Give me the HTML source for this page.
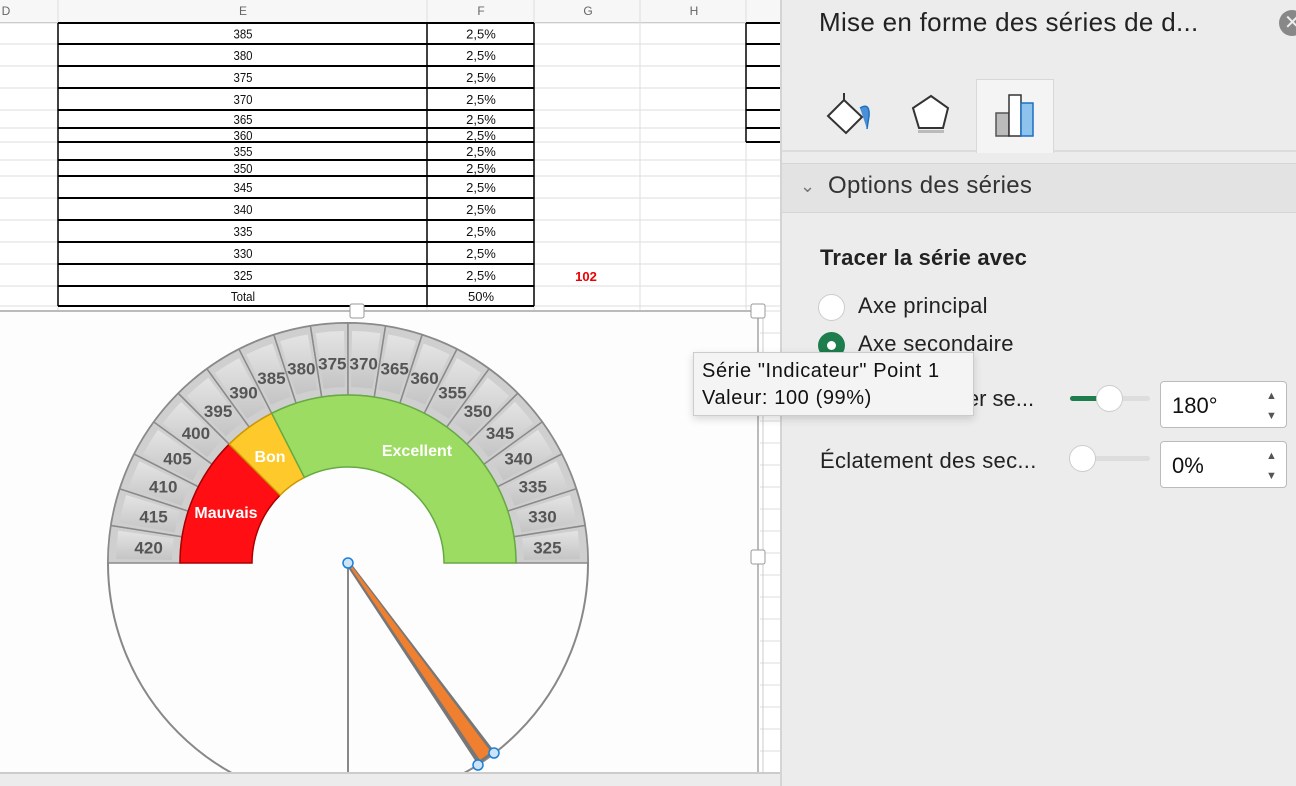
<!DOCTYPE html>
<html><head><meta charset="utf-8"><style>
*{margin:0;padding:0;box-sizing:border-box}
body{width:1296px;height:786px;overflow:hidden;background:#fff;font-family:"Liberation Sans",sans-serif;position:relative}
.abs{position:absolute}
#panel{position:absolute;left:780px;top:0;width:516px;height:786px;background:#ececec;border-left:2px solid #d4d4d4}
</style></head><body>
<svg class="abs" style="left:0;top:0" width="780" height="786" id="sheet"></svg>
<svg class="abs" style="left:0;top:0" width="780" height="786" id="chart"></svg>
<div id="panel">
 <div class="abs" style="left:37px;top:7px;font-size:26px;letter-spacing:0.3px;color:#222">Mise en forme des séries de d...</div>
 <div class="abs" style="left:497px;top:10px;width:26px;height:26px;border-radius:13px;background:#888;color:#eee;font-size:20px;line-height:26px;text-indent:5px">✕</div>
 <div class="abs" style="left:0;top:150px;width:516px;height:2px;background:#dcdcdc"></div>
 <div class="abs" style="left:194px;top:79px;width:78px;height:74px;background:#f4f4f4;border:1px solid #d8d8d8;border-bottom:none"></div>
 <svg class="abs" style="left:40px;top:90px" width="220" height="50">
  <path d="M6 26 L22 10 L40 27 L24 43 Z" fill="#fff" stroke="#333" stroke-width="2"/>
  <path d="M22 10 V3" stroke="#333" stroke-width="2"/>
  <path d="M38 18 Q48 12 47 26 Q46 32 45 39" fill="#4a90d9" stroke="#1f6fc0" stroke-width="1.5"/>
  <path d="M109 6 L126 18 L121 38 L97 38 L91 18 Z" fill="#fff" stroke="#333" stroke-width="2"/>
  <rect x="96" y="40" width="26" height="3" fill="#bbb"/>
  <rect x="174" y="23" width="13" height="23" fill="#bbb" stroke="#555" stroke-width="1.5"/>
  <rect x="187" y="5" width="12" height="41" fill="#fff" stroke="#333" stroke-width="1.5"/>
  <rect x="199" y="13" width="12" height="33" fill="#8ec3ee" stroke="#1f6fc0" stroke-width="1.5"/>
 </svg>
 <div class="abs" style="left:0;top:163px;width:516px;height:50px;background:#e3e3e3;border-top:1px solid #d6d6d6;border-bottom:1px solid #d6d6d6"></div>
 <div class="abs" style="left:18px;top:176px;font-size:18px;color:#777">⌄</div>
 <div class="abs" style="left:46px;top:172px;font-size:24px;letter-spacing:0.3px;color:#333">Options des séries</div>
 <div class="abs" style="left:38px;top:245px;font-size:22px;letter-spacing:0.2px;font-weight:bold;color:#222">Tracer la série avec</div>
 <div class="abs" style="left:36px;top:294px;width:27px;height:27px;border-radius:14px;background:#fff;border:1px solid #ccc"></div>
 <div class="abs" style="left:76px;top:293px;font-size:22px;letter-spacing:0.3px;color:#222">Axe principal</div>
 <div class="abs" style="left:36px;top:332px;width:27px;height:27px;border-radius:14px;background:#1d7d4c"></div>
 <div class="abs" style="left:45px;top:341px;width:9px;height:9px;border-radius:5px;background:#fff"></div>
 <div class="abs" style="left:76px;top:331px;font-size:22px;letter-spacing:0.3px;color:#222">Axe secondaire</div>
 <div class="abs" style="left:180px;top:386px;font-size:22px;color:#222">ier se...</div>
 <div class="abs" style="left:288px;top:396px;width:80px;height:5px;border-radius:3px;background:#ddd"></div>
 <div class="abs" style="left:288px;top:396px;width:35px;height:5px;border-radius:3px;background:#1d7d4c"></div>
 <div class="abs" style="left:314px;top:385px;width:27px;height:27px;border-radius:14px;background:#fff;border:1px solid #ccc"></div>
 <div class="abs" style="left:378px;top:381px;width:127px;height:47px;background:#fff;border:1px solid #bbb;border-radius:4px"></div>
 <div class="abs" style="left:390px;top:393px;font-size:22px;color:#111">180°</div>
 <div class="abs" style="left:484px;top:386px;font-size:11px;color:#555;line-height:20px">▲<br>▼</div>
 <div class="abs" style="left:38px;top:448px;font-size:22px;letter-spacing:0.3px;color:#222">Éclatement des sec...</div>
 <div class="abs" style="left:288px;top:456px;width:80px;height:5px;border-radius:3px;background:#ddd"></div>
 <div class="abs" style="left:287px;top:445px;width:27px;height:27px;border-radius:14px;background:#fff;border:1px solid #ccc"></div>
 <div class="abs" style="left:378px;top:441px;width:127px;height:47px;background:#fff;border:1px solid #bbb;border-radius:4px"></div>
 <div class="abs" style="left:390px;top:453px;font-size:22px;color:#111">0%</div>
 <div class="abs" style="left:484px;top:446px;font-size:11px;color:#555;line-height:20px">▲<br>▼</div>
</div>
<div class="abs" style="left:693px;top:352px;width:281px;height:64px;background:#f4f4f4;border:1px solid #ccc;box-shadow:0 3px 8px rgba(0,0,0,.15);font-size:20px;letter-spacing:0.6px;color:#111;padding:5px 8px;line-height:27px;white-space:nowrap">Série "Indicateur" Point 1<br>Valeur: 100 (99%)</div>
<script>
var ns="http://www.w3.org/2000/svg";
function el(p,t,a,txt){var e=document.createElementNS(ns,t);for(var k in a)e.setAttribute(k,a[k]);if(txt)e.textContent=txt;p.appendChild(e);return e}
var S=document.getElementById('sheet');
el(S,'rect',{x:0,y:0,width:780,height:786,fill:'#fff'});
el(S,'rect',{x:0,y:0,width:780,height:22,fill:'#f7f7f7'});
el(S,'line',{x1:0,y1:22.5,x2:780,y2:22.5,stroke:'#bbb'});
[58,427,534,640,746].forEach(function(x){el(S,'line',{x1:x,y1:0,x2:x,y2:310,stroke:'#ddd'})});
var hdr=[["D",6],["E",243],["F",481],["G",588],["H",694]];
hdr.forEach(function(h){el(S,'text',{x:h[1],y:15,'font-size':12,fill:'#666','text-anchor':'middle','font-family':'Liberation Sans'},h[0])});
var rows=[23,44,66,88,110,128,142,160,176,198,220,242,264,286,306];
rows.forEach(function(y){el(S,'line',{x1:0,y1:y,x2:780,y2:y,stroke:'#ddd'})});
for(var i=0;i<rows.length;i++){el(S,'line',{x1:58,y1:rows[i],x2:534,y2:rows[i],stroke:'#000','stroke-width':2})}
[58,427,534].forEach(function(x){el(S,'line',{x1:x,y1:23,x2:x,y2:306,stroke:'#000','stroke-width':1.5})});
[23,44,66,88,110,128,142].forEach(function(y){el(S,'line',{x1:746,y1:y,x2:780,y2:y,stroke:'#000','stroke-width':2})});
el(S,'line',{x1:746,y1:23,x2:746,y2:142,stroke:'#000','stroke-width':1.5});
var vals=["385","380","375","370","365","360","355","350","345","340","335","330","325","Total"];
for(var i=0;i<vals.length;i++){var y=(rows[i]+rows[i+1])/2+5;
 el(S,'text',{x:243,y:y,'font-size':13,'text-anchor':'middle','font-family':'Liberation Sans',fill:'#111',transform:'translate(243 0) scale(.88 1) translate(-243 0)'},vals[i]);
 el(S,'text',{x:481,y:y,'font-size':13,'text-anchor':'middle','font-family':'Liberation Sans',fill:'#111'},i==13?"50%":"2,5%");}
el(S,'text',{x:586,y:281,'font-size':13,'font-weight':'bold','text-anchor':'middle','font-family':'Liberation Sans',fill:'#e00'},"102");
el(S,'rect',{x:0,y:311,width:758,height:462,fill:'#fdfdfd'});
el(S,'line',{x1:0,y1:311,x2:758,y2:311,stroke:'#bbb','stroke-width':2});
el(S,'line',{x1:758,y1:311,x2:758,y2:773,stroke:'#bbb','stroke-width':2});
for(var y=311;y<773;y+=22)el(S,'line',{x1:760,y1:y,x2:780,y2:y,stroke:'#ddd'});
el(S,'line',{x1:763,y1:311,x2:763,y2:773,stroke:'#ccc'});
var C=document.getElementById('chart');
var cx=348,cy=563;
function pt(r,a){a=a*Math.PI/180;return [cx+r*Math.cos(a),cy-r*Math.sin(a)]}
function seg(r1,r2,a1,a2,fill,stroke){var p1=pt(r2,a1),p2=pt(r2,a2),p3=pt(r1,a2),p4=pt(r1,a1);
 return el(C,'path',{d:'M'+p1+' A'+r2+' '+r2+' 0 0 1 '+p2+' L'+p3+' A'+r1+' '+r1+' 0 0 0 '+p4+' Z',fill:fill,stroke:stroke||'#777','stroke-width':1.5})}
el(C,'circle',{cx:cx,cy:cy,r:240,fill:'none',stroke:'#888','stroke-width':2});
var defs=el(C,'defs',{});
var g=el(defs,'linearGradient',{id:'gg',x1:0,y1:0,x2:0,y2:1});el(g,'stop',{offset:0,'stop-color':'#e4e4e4'});el(g,'stop',{offset:1,'stop-color':'#c4c4c4'});
var labs=["420","415","410","405","400","395","390","385","380","375","370","365","360","355","350","345","340","335","330","325"];
for(var i=0;i<20;i++){seg(168,240,180-i*9,171-i*9,'#cfcfcf','#8a8a8a');seg(176,232,180-i*9-1,171-i*9+1,'url(#gg)','none');}
seg(96,168,180,135,'#ff0f14','#a00');
seg(96,168,135,117,'#fdc92b','#c90');
seg(96,168,117,0,'#9ddc62','#6a4');
for(var i=0;i<20;i++){var p=pt(200,175.5-i*9);
 el(C,'text',{x:p[0],y:p[1]+6,'font-size':17,'font-weight':'bold','text-anchor':'middle','font-family':'Liberation Sans',fill:'#555'},labs[i]);}
function lab(x,y,t){el(C,'text',{x:x,y:y,'font-size':16,'font-weight':'bold','text-anchor':'middle','font-family':'Liberation Sans',fill:'#fff'},t)}
lab(226,518,"Mauvais");lab(270,462,"Bon");lab(417,456,"Excellent");
el(C,'line',{x1:348,y1:563,x2:348,y2:773,stroke:'#888','stroke-width':2});
el(C,'path',{d:'M347 566 L350 562 L495 752 L478 765 Z',fill:'#777'});
el(C,'path',{d:'M348 564 L351 565 L491 752 L480 760 Z',fill:'#f08030'});
el(C,'rect',{x:0,y:773,width:780,height:13,fill:'#ececec'});
el(C,'line',{x1:0,y1:773,x2:780,y2:773,stroke:'#ccc','stroke-width':2});
[[348,563],[494,753],[478,765]].forEach(function(p){el(C,'circle',{cx:p[0],cy:p[1],r:5,fill:'#cde3f7',stroke:'#1a7fd9','stroke-width':1.5})});
[[357,311],[758,311],[758,557]].forEach(function(p){el(C,'rect',{x:p[0]-7,y:p[1]-7,width:14,height:14,rx:2,fill:'#fff',stroke:'#999'})});
</script>
</body></html>
